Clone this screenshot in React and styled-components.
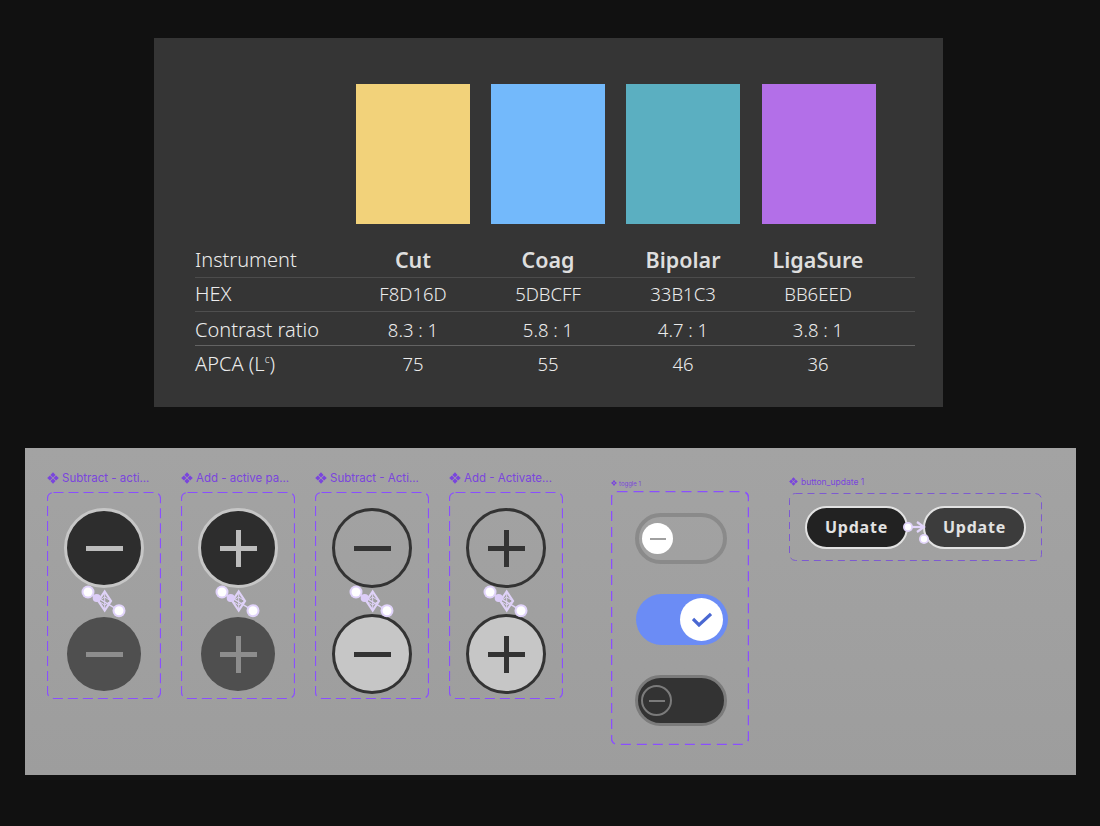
import styled, { createGlobalStyle } from 'styled-components';

const GlobalStyle = createGlobalStyle`
    html, body {
        margin: 0;
        background: #111111;
    }
    * {
        box-sizing: border-box;
    }
`;

// dashes of a figma frame, css "dashed" can't set the dash length
const dashes = (color, width, dash) =>
    `url("data:image/svg+xml;utf8,<svg xmlns='http://www.w3.org/2000/svg' width='100%25' height='100%25'><rect x='0.5' y='0.5' style='width:calc(100%25 - 1px);height:calc(100%25 - 1px)' rx='6' fill='none' stroke='${color.replace('#', '%23')}' stroke-width='${width}' stroke-dasharray='${dash}'/></svg>")`;

const Page = styled.div`
    width: 1100px;
    height: 826px;
    padding-top: 38px;
    overflow: hidden;
    font-family: 'Noto Sans', sans-serif;
`;

const Card = styled.section`
    width: 789px;
    height: 369px;
    margin-left: 154px;
    padding: 46px 28px 0 41px;
    background: #353535;
`;

const Swatches = styled.div`
    display: flex;
    gap: 21.2px;
    margin-left: 161px;
`;

const Swatch = styled.div`
    width: 114px;
    height: 140px;
    background: ${(props) => props.$color};
`;

const Table = styled.div`
    margin-top: 21px;
`;

const Row = styled.div`
    display: grid;
    grid-template-columns: 140px repeat(4, 114px);
    column-gap: 21px;
    align-items: center;
    height: ${(props) => (props.$head ? '33px' : '34px')};
    padding-top: ${(props) => props.$above || 0}px;
    padding-bottom: ${(props) => props.$below || 0}px;
    border-bottom: ${(props) => (props.$line ? `1px solid ${props.$line}` : 'none')};
    color: #ececec;
`;

const RowLabel = styled.div`
    font-size: 20px;
    font-weight: 300;
    white-space: nowrap;
`;

const HeadCell = styled.div`
    text-align: center;
    font-size: 21.5px;
    font-weight: 600;
    color: #dedede;
`;

const Cell = styled.div`
    text-align: center;
    font-size: 18.5px;
    font-weight: 300;
`;

const Sup = styled.sup`
    font-size: 10px;
    line-height: 0;
`;

const Panel = styled.section`
    display: flex;
    align-items: flex-start;
    width: 1051px;
    height: 327px;
    margin: 41px 0 0 25px;
    padding: 22px 0 0 22px;
    background: linear-gradient(#a3a3a3, #9d9d9d);
`;

const ButtonFrames = styled.div`
    display: flex;
    gap: 20px;
`;

const FrameGroup = styled.div`
    display: flex;
    flex-direction: column;
    margin-left: ${(props) => props.$left || 0}px;
    padding-top: ${(props) => props.$top || 0}px;
`;

const FrameLabel = styled.div`
    display: flex;
    align-items: center;
    gap: ${(props) => props.$gap}px;
    height: ${(props) => props.$height}px;
    margin-bottom: ${(props) => props.$below}px;
    font-family: Inter, sans-serif;
    font-size: ${(props) => props.$size}px;
    color: #7a45dd;
    white-space: nowrap;
`;

const Frame = styled.div`
    position: relative;
    display: flex;
    flex-direction: column;
    align-items: center;
    background-image: ${dashes('#8a4fff', 1.2, '10 5')};
`;

const ButtonStack = styled(Frame)`
    width: 114px;
    height: 207px;
    padding-top: 16px;
    gap: 26px;
`;

const Slot = styled.div`
    display: flex;
    align-items: center;
    justify-content: center;
    width: 80px;
    height: 80px;
`;

const Round = styled.div`
    display: flex;
    align-items: center;
    justify-content: center;
    width: ${(props) => props.$size}px;
    height: ${(props) => props.$size}px;
    border-radius: 50%;
    border: ${(props) => (props.$ring ? `3px solid ${props.$ring}` : 'none')};
    background: ${(props) => props.$bg};
    color: ${(props) => props.$fg};
`;

const ToggleStack = styled(Frame)`
    width: 138px;
    height: 254px;
    padding: 22px 0 0 2px;
    gap: 30px;
    background-image: ${dashes('#8a4fff', 1.5, '10 6')};
`;

const Toggle = styled.div`
    display: flex;
    align-items: center;
    justify-content: ${(props) => (props.$on ? 'flex-end' : 'flex-start')};
    width: 92px;
    height: 51px;
    margin-left: ${(props) => (props.$on ? '2px' : '0')};
    padding: 0 ${(props) => (props.$on ? '5px' : '3px')};
    border-radius: 26px;
    border: ${(props) => (props.$border ? `${props.$border} solid ${props.$line}` : 'none')};
    background: ${(props) => props.$bg};
`;

const Knob = styled.div`
    display: flex;
    align-items: center;
    justify-content: center;
    width: ${(props) => props.$size}px;
    height: ${(props) => props.$size}px;
    border-radius: 50%;
    border: ${(props) => (props.$line ? `2.5px solid ${props.$line}` : 'none')};
    background: ${(props) => props.$bg};
`;

const KnobDash = styled.div`
    width: 16px;
    height: 2px;
    background: ${(props) => props.$color};
`;

const UpdateFrame = styled(Frame)`
    flex-direction: row;
    justify-content: center;
    width: 253px;
    height: 68px;
    padding-top: 13px;
    gap: 15px;
    align-items: flex-start;
    background-image: ${dashes('#7d5ad0', 1, '7 5')};
`;

const UpdateButton = styled.div`
    display: flex;
    align-items: center;
    justify-content: center;
    width: 103px;
    height: 43px;
    padding-bottom: 1px;
    border-radius: 22px;
    border: 2px solid #e2e2e2;
    background: ${(props) => props.$bg};
    color: #e2e2e2;
    font-size: 16px;
    font-weight: 700;
    letter-spacing: 0.8px;
`;

const Wire = styled.svg`
    position: absolute;
    left: ${(props) => props.$x}px;
    top: ${(props) => props.$y}px;
`;

const ComponentMark = ({ size = 12 }) => (
    <svg width={size} height={size} viewBox="0 0 12 12" fill="currentColor">
        <path d="M6 .2 8.6 2.9 6 5.5 3.4 2.9ZM6 6.5 8.6 9.1 6 11.8 3.4 9.1ZM.2 6 2.9 3.4 5.5 6 2.9 8.6ZM6.5 6 9.1 3.4 11.8 6 9.1 8.6Z" />
    </svg>
);

const MinusIcon = () => (
    <svg width="37" height="37" viewBox="0 0 37 37" fill="currentColor">
        <rect x="0" y="16" width="37" height="5" />
    </svg>
);

const PlusIcon = () => (
    <svg width="37" height="37" viewBox="0 0 37 37" fill="currentColor">
        <rect x="0" y="16" width="37" height="5" />
        <rect x="16" y="0" width="5" height="37" />
    </svg>
);

const CheckIcon = () => (
    <svg width="20" height="15" viewBox="0 0 20 15" fill="none" stroke="#4a68d2" strokeWidth="3.2">
        <path d="M1 7 7 13 19 2" />
    </svg>
);

// prototype link between the two variants
const StackWire = () => (
    <Wire $x={33} $y={92} width="48" height="34" viewBox="0 0 48 34">
        <g stroke="#dfd2f8" fill="none" strokeWidth="1.4">
            <path d="M8 8 39 26.7" />
            <path d="M24.7 7.5 31 17 24.7 26.5 18.3 17Z" strokeWidth="2.2" />
            <path d="M18.3 17 24.7 13 31 17 24.7 21ZM24.7 7.5 24.7 26.5" strokeWidth="1" />
        </g>
        <circle cx="16.7" cy="14" r="4" fill="#dccdf8" />
        <circle cx="8" cy="8" r="6.5" fill="#e0d3fa" />
        <circle cx="8" cy="8" r="4.5" fill="#ffffff" />
        <circle cx="39" cy="26.7" r="6.5" fill="#e0d3fa" />
        <circle cx="39" cy="26.7" r="4.5" fill="#ffffff" />
    </Wire>
);

const UpdateWire = () => (
    <Wire $x={112} $y={24} width="34" height="28" viewBox="0 0 34 28">
        <g stroke="#e2d5fb" fill="none" strokeWidth="2.2">
            <path d="M7 10 H23" />
            <path d="M16 5 23 10 16 15" />
        </g>
        <circle cx="7" cy="10" r="5" fill="#e2d5fb" />
        <circle cx="7" cy="10" r="3.2" fill="#ffffff" />
        <circle cx="23" cy="22" r="5" fill="#e2d5fb" />
        <circle cx="23" cy="22" r="3.2" fill="#ffffff" />
    </Wire>
);

const swatches = ['#F2D27A', '#73B9FB', '#5BAFC1', '#B36FE8'];

const rows = [
    { label: 'HEX', values: ['F8D16D', '5DBCFF', '33B1C3', 'BB6EED'], line: '#4f4f4f', below: 2 },
    { label: 'Contrast ratio', values: ['8.3 : 1', '5.8 : 1', '4.7 : 1', '3.8 : 1'], line: '#636363', above: 2 },
    { label: <>APCA (L<Sup>c</Sup>)</>, values: ['75', '55', '46', '36'] },
];

const buttonGroups = [
    {
        title: 'Subtract - acti...',
        Icon: MinusIcon,
        top: { size: 80, bg: '#2d2d2d', ring: '#c6c6c6', fg: '#bcbcbc' },
        bottom: { size: 74, bg: '#4f4f4f', fg: '#8d8d8d' },
    },
    {
        title: 'Add - active pa...',
        Icon: PlusIcon,
        top: { size: 80, bg: '#2d2d2d', ring: '#c6c6c6', fg: '#bcbcbc' },
        bottom: { size: 74, bg: '#4f4f4f', fg: '#8d8d8d' },
    },
    {
        title: 'Subtract - Acti...',
        Icon: MinusIcon,
        top: { size: 80, bg: 'transparent', ring: '#333333', fg: '#333333' },
        bottom: { size: 80, bg: '#c6c6c6', ring: '#333333', fg: '#333333' },
    },
    {
        title: 'Add - Activate...',
        Icon: PlusIcon,
        top: { size: 80, bg: 'transparent', ring: '#333333', fg: '#333333' },
        bottom: { size: 80, bg: '#c6c6c6', ring: '#333333', fg: '#333333' },
    },
];

const RoundButton = ({ Icon, size, bg, ring, fg }) => (
    <Slot>
        <Round $size={size} $bg={bg} $ring={ring} $fg={fg}>
            <Icon />
        </Round>
    </Slot>
);

const App = () => {
    return (
        <Page>
            <GlobalStyle />
            <Card>
                <Swatches>
                    {swatches.map((color) => (
                        <Swatch key={color} $color={color} />
                    ))}
                </Swatches>
                <Table>
                    <Row $head $line="#4c4c4c" $below={4}>
                        <RowLabel>Instrument</RowLabel>
                        <HeadCell>Cut</HeadCell>
                        <HeadCell>Coag</HeadCell>
                        <HeadCell>Bipolar</HeadCell>
                        <HeadCell>LigaSure</HeadCell>
                    </Row>
                    {rows.map((row, i) => (
                        <Row key={i} $line={row.line} $above={row.above} $below={row.below}>
                            <RowLabel>{row.label}</RowLabel>
                            {row.values.map((value) => (
                                <Cell key={value}>{value}</Cell>
                            ))}
                        </Row>
                    ))}
                </Table>
            </Card>
            <Panel>
                <ButtonFrames>
                    {buttonGroups.map((group) => (
                        <FrameGroup key={group.title}>
                            <FrameLabel $size={11.5} $gap={3} $height={15} $below={7}>
                                <ComponentMark />
                                {group.title}
                            </FrameLabel>
                            <ButtonStack>
                                <RoundButton Icon={group.Icon} {...group.top} />
                                <RoundButton Icon={group.Icon} {...group.bottom} />
                                <StackWire />
                            </ButtonStack>
                        </FrameGroup>
                    ))}
                </ButtonFrames>
                <FrameGroup $left={48} $top={9}>
                    <FrameLabel $size={6} $gap={2} $height={8} $below={4}>
                        <ComponentMark size={6} />
                        toggle 1
                    </FrameLabel>
                    <ToggleStack>
                        <Toggle $border="4px" $line="#8a8a8a" $bg="transparent">
                            <Knob $size={31} $bg="#ffffff">
                                <KnobDash $color="#a0a0a0" />
                            </Knob>
                        </Toggle>
                        <Toggle $on $bg="#6b8cf5">
                            <Knob $size={43} $bg="#ffffff">
                                <CheckIcon />
                            </Knob>
                        </Toggle>
                        <Toggle $border="3px" $line="#7b7b7b" $bg="#333333">
                            <Knob $size={31} $bg="transparent" $line="#7b7b7b">
                                <KnobDash $color="#7b7b7b" />
                            </Knob>
                        </Toggle>
                    </ToggleStack>
                </FrameGroup>
                <FrameGroup $left={40} $top={4}>
                    <FrameLabel $size={8.5} $gap={3} $height={15} $below={4}>
                        <ComponentMark size={9} />
                        button_update 1
                    </FrameLabel>
                    <UpdateFrame>
                        <UpdateButton $bg="#222222">Update</UpdateButton>
                        <UpdateButton $bg="#3c3c3c">Update</UpdateButton>
                        <UpdateWire />
                    </UpdateFrame>
                </FrameGroup>
            </Panel>
        </Page>
    );
};

export default App;
